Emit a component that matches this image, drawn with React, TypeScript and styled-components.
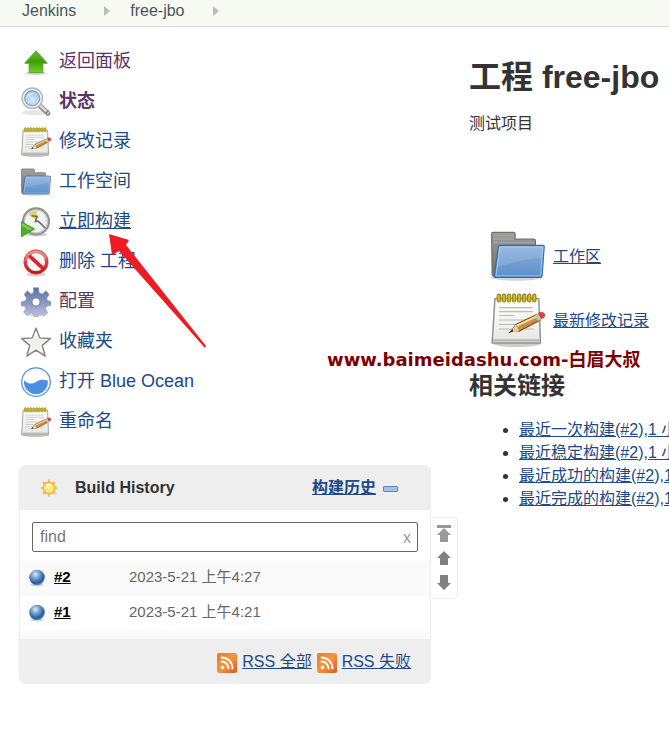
import React from "react";
import styled, { createGlobalStyle, css } from "styled-components";

const sans = `"Liberation Sans", Arial, "Noto Sans CJK SC", sans-serif`;
const LINK = "#204a87";
const VISITED = "#5c3566";

const GlobalStyle = createGlobalStyle`
  *, *::before, *::after { box-sizing: border-box; }
  body {
    margin: 0;
    background: #fff;
    color: #333;
    font-family: ${sans};
    font-size: 16px;
    line-height: 23px;
    overflow-x: hidden;
  }
`;

const Page = styled.div`
  position: relative;
  overflow: hidden;
`;

const Breadcrumbs = styled.nav`
  display: flex;
  align-items: center;
  gap: 20px;
  padding: 0 22px 4px;
  background: #f6faf2;
  border-bottom: 1px solid #d3d7cf;
`;

const Crumb = styled.a`
  color: #4d545d;
  line-height: 22px;
  text-decoration: none;
`;

const CrumbArrow = styled.span`
  width: 0;
  height: 0;
  margin-left: 8px;
  border: solid transparent;
  border-width: 5px 0 5px 6px;
  border-left-color: #babdb6;
`;

const Columns = styled.div`
  display: grid;
  grid-template-columns: minmax(0, 412fr) minmax(0, 200fr);
  gap: 38px;
  padding: 15px 0 48px 19px;
`;

const Side = styled.aside`
  min-width: 0;
`;

const Tasks = styled.ul`
  list-style: none;
  margin: 0 0 23px;
  padding: 0 2px;
`;

const Task = styled.li`
  display: flex;
  align-items: center;
  gap: 8px;
  height: 40px;
  svg {
    flex: none;
    width: 30px;
    height: 30px;
  }
`;

const TaskLink = styled.a<{ $visited?: boolean; $active?: boolean; $underlined?: boolean }>`
  padding-bottom: 2px;
  color: ${(p) => (p.$visited ? VISITED : LINK)};
  font-size: 18px;
  font-weight: ${(p) => (p.$active ? 700 : 400)};
  line-height: 24px;
  text-decoration: ${(p) => (p.$underlined ? "underline" : "none")};
`;

const link = css`
  color: ${LINK};
  text-decoration: underline;
`;

const HistoryPanel = styled.section`
  position: relative;
  border: 1px solid #eee;
  border-radius: 6px;
`;

const HistoryHeader = styled.header`
  display: flex;
  align-items: center;
  height: 44px;
  padding: 0 32px 0 18px;
  background: #eee;
  border-radius: 5px 5px 0 0;
`;

const HistoryTitle = styled.h2`
  flex: 1;
  margin: 0 0 0 15px;
  font-size: 16px;
  line-height: 24px;
`;

const TrendLink = styled.a`
  ${link}
  font-weight: 700;
  margin-right: 7px;
  padding-bottom: 2px;
`;

const CollapseButton = styled.button`
  width: 15px;
  height: 6px;
  margin-top: 2px;
  padding: 0;
  border: 1px solid #5b88bd;
  border-radius: 1px;
  background: #a3c1e3;
`;

const SearchBox = styled.div`
  display: flex;
  align-items: center;
  height: 30px;
  margin: 12px 12px 9px;
  border: 1px solid #666;
  border-radius: 2px;
`;

const SearchInput = styled.input`
  flex: 1;
  min-width: 0;
  padding: 0 7px;
  border: 0;
  outline: 0;
  background: transparent;
  font: 16px ${sans};
  &::placeholder {
    color: #777;
    opacity: 1;
  }
`;

const ClearButton = styled.button`
  padding: 2px 6px 0;
  border: 0;
  background: none;
  color: #999;
  font: 16px ${sans};
`;

const Builds = styled.table`
  width: 100%;
  border-collapse: collapse;
`;

const BuildRow = styled.tr`
  height: 35px;
  &:nth-child(odd) {
    background: #fafafa;
  }
`;

const BuildCell = styled.td<{ $width?: number }>`
  width: ${(p) => (p.$width ? `${p.$width}px` : "auto")};
  padding: 0 0 4px 8px;
  color: #666;
  font-size: 15px;
  vertical-align: middle;
  svg {
    display: block;
    margin-top: 3px;
  }
`;

const IconCell = styled(BuildCell)`
  padding-left: 8px;
`;

const BuildNumber = styled.a`
  color: #000;
  font-weight: 700;
  text-decoration: underline;
`;

const Spacer = styled.div`
  height: 8px;
  background: #fafafa;
`;

const HistoryFooter = styled.footer`
  display: flex;
  align-items: center;
  justify-content: flex-end;
  gap: 5px;
  height: 44px;
  padding-right: 19px;
  background: #eee;
  border-radius: 0 0 5px 5px;
`;

const FeedLink = styled.a`
  ${link}
  display: flex;
  align-items: center;
  gap: 5px;
  svg {
    flex: none;
    margin-top: 3px;
  }
`;

const PageControls = styled.div`
  position: absolute;
  left: 100%;
  top: 51px;
  display: grid;
  width: 28px;
  padding: 4px 0;
  border: 1px solid #eee;
  border-radius: 0 4px 4px 0;
`;

const PageButton = styled.button`
  height: 24px;
  padding: 0;
  border: 0;
  background: none;
  svg {
    display: block;
    margin: auto;
  }
`;

const Main = styled.main`
  min-width: 0;
  white-space: nowrap;
`;

const Title = styled.h1`
  margin: 12px 0;
  font-size: 32px;
  line-height: 46px;
`;

const Description = styled.p`
  margin: 0 0 88px;
  line-height: 24px;
`;

const Shortcut = styled.div`
  display: flex;
  align-items: center;
  gap: 8px;
  height: 64px;
  margin-left: 22px;
  a {
    ${link}
  }
`;

const SectionTitle = styled.h2`
  margin: 16px 0 14px;
  font-size: 24px;
  line-height: 36px;
`;

const Permalinks = styled.ul`
  margin: 0;
  padding-left: 50px;
  a {
    ${link}
  }
`;

const Watermark = styled.div`
  position: absolute;
  left: 327px;
  top: 347px;
  color: #7d0000;
  font: 700 18px/26px "DejaVu Sans", "Noto Sans CJK SC", sans-serif;
  white-space: nowrap;
`;

const Pointer = styled.svg`
  position: absolute;
  left: 108px;
  top: 233px;
  pointer-events: none;
`;

const UpIcon = () => (
  <svg viewBox="0 0 48 48" aria-hidden="true">
    <defs>
      <linearGradient id="up" x1="0" y1="0" x2="0" y2="1">
        <stop offset="0" stopColor="#73b83b" />
        <stop offset=".5" stopColor="#3f9c0c" />
        <stop offset="1" stopColor="#6fd422" />
      </linearGradient>
    </defs>
    <ellipse cx="24" cy="42" rx="17" ry="3" fill="#000" opacity=".16" />
    <path d="M24 6 42 26H35V41H13V26H6Z" fill="url(#up)" stroke="#58a12f" strokeWidth="1.500" strokeLinejoin="round" />
  </svg>
);

const SearchIcon = () => (
  <svg viewBox="0 0 48 48" aria-hidden="true">
    <defs>
      <radialGradient id="lens" cx=".5" cy=".6" r=".6">
        <stop offset="0" stopColor="#dcebfa" />
        <stop offset="1" stopColor="#8db5e3" />
      </radialGradient>
    </defs>
    <ellipse cx="22" cy="41" rx="20" ry="4" fill="#000" opacity=".1" />
    <path d="m29 29 14 13" stroke="#8b8d89" strokeWidth="8" strokeLinecap="round" />
    <path d="m31 30 12 11" stroke="#d6d8d4" strokeWidth="4" strokeLinecap="round" />
    <path d="m40 42 4-5" stroke="#777" strokeWidth="2" />
    <circle cx="18" cy="18" r="15.500" fill="url(#lens)" stroke="#b4b7b2" strokeWidth="4" />
    <circle cx="18" cy="18" r="14" fill="none" stroke="#eff0ee" strokeWidth="2.500" />
    <circle cx="18" cy="18" r="12" fill="none" stroke="#7299c8" strokeWidth="1.500" />
    <path d="M8 19c1-8 7-11 14-9-6 1-10 4-14 9Z" fill="#fff" opacity=".6" />
  </svg>
);

const NotepadIcon = ({ size }: { size?: number }) => (
  <svg viewBox="0 0 48 48" width={size} height={size} aria-hidden="true">
    <defs>
      <linearGradient id="paper" x1="0" y1="0" x2="0" y2="1">
        <stop offset="0" stopColor="#fff" />
        <stop offset="1" stopColor="#e6e7e4" />
      </linearGradient>
      <linearGradient id="pencil" x1="0" y1="0" x2="1" y2="1">
        <stop offset="0" stopColor="#f0c277" />
        <stop offset="1" stopColor="#a8671a" />
      </linearGradient>
    </defs>
    <ellipse cx="23" cy="45" rx="21" ry="3" fill="#000" opacity=".2" />
    <path d="M3.500 5H42.500L44 44.500H1Z" fill="url(#paper)" stroke="#90928e" strokeWidth="1.300" strokeLinejoin="round" />
    <path d="M2 42h41" stroke="#b5b7b3" strokeWidth="2" />
    <path d="M7 13h30M7 16.500h30M7 20h14M7 24h26M7 28h20M7 32h15M30 32h8" stroke="#b9bbb8" strokeWidth="1" />
    {[6, 10.500, 15, 19.500, 24, 28.500, 33, 37.500].map((x) => (
      <rect key={x} x={x - 0.5} y="1" width="3" height="7" rx="1.500" fill="#d1bb25" stroke="#8e7d12" strokeWidth=".9" />
    ))}
    <path d="m18 34 4-6 19-9 3 5-19 10Z" fill="url(#pencil)" stroke="#82500f" strokeWidth="1" strokeLinejoin="round" />
    <path d="m23 29 17-8" stroke="#ffe0a2" strokeWidth="1.500" />
    <path d="m17 35 5-7 3 6Z" fill="#e6cfa5" />
    <path d="m15 36 5-2-1-2Z" fill="#333" />
    <path d="m39 20 3-2 3 5-3 2Z" fill="#c2c5c0" />
    <path d="m42 18 3-1q4 1 2.500 4L45 23Z" fill="#e2413d" stroke="#b5281f" strokeWidth=".5" />
  </svg>
);

const FolderIcon = ({ size }: { size?: number }) => (
  <svg viewBox="0 0 48 48" width={size} height={size} aria-hidden="true">
    <defs>
      <linearGradient id="folder" x1="0" y1="0" x2="0" y2="1">
        <stop offset="0" stopColor="#8bb0dc" />
        <stop offset="1" stopColor="#5d8fca" />
      </linearGradient>
      <linearGradient id="folderBack" x1="0" y1="0" x2="0" y2="1">
        <stop offset="0" stopColor="#9b9d99" />
        <stop offset="1" stopColor="#6d6f6b" />
      </linearGradient>
    </defs>
    <ellipse cx="23" cy="43" rx="23" ry="3" fill="#000" opacity=".17" />
    <path d="M.5 4.500Q.5 3 2 3h18q1.500 0 1.500 1.500V9H38q1.500 0 1.500 1.500V42H3Q1 42 1 40Z" fill="url(#folderBack)" stroke="#70726e" />
    <path d="M2 6h18M2 9h18M2 12h36" stroke="#b4b6b2" opacity=".6" />
    <path d="M6.500 16q0-1.500 1.500-1.500H46q1.500 0 1.300 1.500L45.500 41q-.2 2-2 2H4q-1.500 0-1-2Z" fill="url(#folder)" stroke="#3769a8" />
    <path d="M8 16h38l-1.800 25.500H4.500Z" fill="none" stroke="#b7d0ed" opacity=".7" />
    <path d="M8 16h38l-.8 10Q28 26 6 34Z" fill="#fff" opacity=".12" />
  </svg>
);

const BuildNowIcon = () => (
  <svg viewBox="0 0 48 48" aria-hidden="true">
    <ellipse cx="25" cy="44" rx="17" ry="3" fill="#000" opacity=".2" />
    <circle cx="24" cy="23" r="20.500" fill="#f2f2ee" stroke="#8f928d" strokeWidth="4" />
    <circle cx="24" cy="23" r="18.500" fill="none" stroke="#c4c6d4" strokeWidth="2" />
    <path d="M25 22 12 12q4-6 13-6Z" fill="#e8ce5c" />
    <path d="m17 14 9 1-3 8h5L39 34" fill="none" stroke="#6b6d69" strokeWidth="2.500" />
    <path d="M40 14v18" stroke="#babdb6" strokeWidth="2" strokeDasharray="2 5" />
    <path d="M0 23 22 35 0 48Z" fill="#51ad25" stroke="#338711" strokeLinejoin="round" />
    <path d="m1 25 17 10-7 2Q7 31 1 31Z" fill="#a0dd72" opacity=".6" />
  </svg>
);

const DeleteIcon = () => (
  <svg viewBox="0 0 48 48" aria-hidden="true">
    <defs>
      <linearGradient id="ban" x1="0" y1="0" x2="0" y2="1">
        <stop offset="0" stopColor="#e86b6b" />
        <stop offset="1" stopColor="#cb1515" />
      </linearGradient>
    </defs>
    <ellipse cx="24" cy="44" rx="16" ry="3" fill="#000" opacity=".18" />
    <circle cx="24" cy="24" r="16.500" fill="#f7f5f5" />
    <path d="m12 13 24 22" stroke="#d62626" strokeWidth="6" />
    <circle cx="24" cy="24" r="17" fill="none" stroke="url(#ban)" strokeWidth="5" />
    <circle cx="24" cy="24" r="19.500" fill="none" stroke="#c23a3a" strokeWidth="1" />
    <path d="M7 22Q9 9 23 7q13 0 17 13" fill="none" stroke="#fff" strokeWidth="2" opacity=".35" />
  </svg>
);

const GearIcon = () => (
  <svg viewBox="0 0 48 48" aria-hidden="true">
    <defs>
      <linearGradient id="gear" x1="0" y1="0" x2="0" y2="1">
        <stop offset="0" stopColor="#59719f" />
        <stop offset=".5" stopColor="#8796c0" />
        <stop offset="1" stopColor="#c5c0e0" />
      </linearGradient>
    </defs>
    <ellipse cx="24" cy="44" rx="15" ry="3" fill="#000" opacity=".15" />
    <path
      d="M20 1h8l1 8 5 2 6-5 5 6-4 6 2 4 5 1v6l-7 2-2 4 4 6-6 5-6-3-3 1-1 3h-6l-1-4-4-2-6 5-6-6 4-5-2-4-6-1v-6l7-2 2-4-4-6 5-6 6 5 4-2Z"
      fill="url(#gear)"
      stroke="#7d8ab2"
      strokeWidth=".8"
      strokeLinejoin="round"
    />
    <circle cx="24" cy="24" r="8" fill="#6e7faf" opacity=".55" />
    <circle cx="24" cy="24" r="5.500" fill="#fff" />
  </svg>
);

const StarIcon = () => (
  <svg viewBox="0 0 48 48" aria-hidden="true">
    <path d="m24 2 6 15.500 17 1-13 11 4.500 17L24 37 9.500 46.500l4.500-17-13-11 17-1Z" fill="#eeeeec" stroke="#888a85" strokeWidth="2.500" strokeLinejoin="round" />
    <path d="m24 8 4.500 11.500 12 1-9.500 8 3 11.500-10-6.500L14 40l3-11.500-9.500-8 12-1Z" fill="none" stroke="#fff" strokeWidth="1.500" />
  </svg>
);

const OceanIcon = () => (
  <svg viewBox="0 0 48 48" aria-hidden="true">
    <circle cx="24" cy="24" r="22.800" fill="#fff" stroke="#4a90e2" strokeWidth="2" />
    <path d="M5 21c6 6 12 7 19 3 7-5 13-4 19-2a19.200 19.200 0 1 1-38-1Z" fill="#4a90e2" />
  </svg>
);

const SunIcon = () => (
  <svg viewBox="0 0 24 24" width="22" height="22" aria-hidden="true">
    <path d="m12 2 2 4 5-1-1 5 4 2-4 2 1 5-5-1-2 4-2-4-5 1 1-5-4-2 4-2-1-5 5 1Z" fill="#f9b65a" />
    <circle cx="12" cy="12" r="6" fill="#fce96f" stroke="#f5a53c" />
    <circle cx="11" cy="10" r="3" fill="#fff5b0" />
  </svg>
);

const BallIcon = () => (
  <svg viewBox="0 0 18 18" width="18" height="18" aria-hidden="true">
    <defs>
      <radialGradient id="ball" cx=".4" cy=".3" r=".7">
        <stop offset="0" stopColor="#dce9f4" />
        <stop offset=".4" stopColor="#709dcc" />
        <stop offset=".8" stopColor="#275b9f" />
        <stop offset="1" stopColor="#5c8cc4" />
      </radialGradient>
    </defs>
    <ellipse cx="9" cy="16" rx="7" ry="1.500" fill="#000" opacity=".15" />
    <circle cx="9" cy="8.500" r="7.800" fill="url(#ball)" />
  </svg>
);

const FeedIcon = () => (
  <svg viewBox="0 0 20 20" width="20" height="20" aria-hidden="true">
    <defs>
      <linearGradient id="feed" x1="0" y1="0" x2="1" y2="1">
        <stop offset="0" stopColor="#e47b2c" />
        <stop offset=".5" stopColor="#f6953f" />
        <stop offset="1" stopColor="#d75a20" />
      </linearGradient>
    </defs>
    <rect width="20" height="20" rx="2" fill="url(#feed)" />
    <circle cx="5.500" cy="14.500" r="1.800" fill="#fff" />
    <path d="M4.500 8.500a7 7 0 0 1 7 7M4.500 4.500a11 11 0 0 1 11 11" fill="none" stroke="#fff" strokeWidth="1.800" strokeLinecap="round" />
  </svg>
);

const ArrowIcon = ({ kind }: { kind: "top" | "up" | "down" }) => (
  <svg viewBox="0 0 16 20" width="16" height="20" aria-hidden="true" fill={kind === "top" ? "#999" : "#808080"}>
    {kind === "top" && <path d="M1 1h14v3H1ZM8 4l7 7h-3v7H4v-7H1Z" />}
    {kind === "up" && <path d="m8 3 7 7h-3v7H4v-7H1Z" />}
    {kind === "down" && <path d="m8 18 7-7h-3V3H4v8H1Z" />}
  </svg>
);

const tasks = [
  { label: "返回面板", icon: <UpIcon />, visited: true },
  { label: "状态", icon: <SearchIcon />, visited: true, active: true },
  { label: "修改记录", icon: <NotepadIcon /> },
  { label: "工作空间", icon: <FolderIcon /> },
  { label: "立即构建", icon: <BuildNowIcon />, underlined: true },
  { label: "删除 工程", icon: <DeleteIcon /> },
  { label: "配置", icon: <GearIcon />, visited: true },
  { label: "收藏夹", icon: <StarIcon /> },
  { label: "打开 Blue Ocean", icon: <OceanIcon /> },
  { label: "重命名", icon: <NotepadIcon /> },
];

const builds = [
  { id: "#2", date: "2023-5-21 上午4:27" },
  { id: "#1", date: "2023-5-21 上午4:21" },
];

const permalinks = [
  "最近一次构建(#2),1 小时",
  "最近稳定构建(#2),1 小时",
  "最近成功的构建(#2),1 小时",
  "最近完成的构建(#2),1 小时",
];

export default function App() {
  return (
    <Page>
      <GlobalStyle />
      <Breadcrumbs>
        <Crumb href="#jenkins">Jenkins</Crumb>
        <CrumbArrow />
        <Crumb href="#project">free-jbo</Crumb>
        <CrumbArrow />
      </Breadcrumbs>

      <Columns>
        <Side>
          <Tasks>
            {tasks.map((t) => (
              <Task key={t.label}>
                {t.icon}
                <TaskLink href="#task" $visited={t.visited} $active={t.active} $underlined={t.underlined}>
                  {t.label}
                </TaskLink>
              </Task>
            ))}
          </Tasks>

          <HistoryPanel>
            <HistoryHeader>
              <SunIcon />
              <HistoryTitle>Build History</HistoryTitle>
              <TrendLink href="#trend">构建历史</TrendLink>
              <CollapseButton type="button" aria-label="collapse" />
            </HistoryHeader>
            <SearchBox>
              <SearchInput type="text" placeholder="find" aria-label="find" />
              <ClearButton type="button">x</ClearButton>
            </SearchBox>
            <Builds>
              <tbody>
                {builds.map((b) => (
                  <BuildRow key={b.id}>
                    <IconCell $width={24}>
                      <BallIcon />
                    </IconCell>
                    <BuildCell $width={75}>
                      <BuildNumber href="#build">{b.id}</BuildNumber>
                    </BuildCell>
                    <BuildCell>{b.date}</BuildCell>
                  </BuildRow>
                ))}
              </tbody>
            </Builds>
            <Spacer />
            <HistoryFooter>
              <FeedLink href="#rss-all">
                <FeedIcon />
                RSS 全部
              </FeedLink>
              <FeedLink href="#rss-failed">
                <FeedIcon />
                RSS 失败
              </FeedLink>
            </HistoryFooter>
            <PageControls>
              <PageButton type="button" aria-label="newest">
                <ArrowIcon kind="top" />
              </PageButton>
              <PageButton type="button" aria-label="newer">
                <ArrowIcon kind="up" />
              </PageButton>
              <PageButton type="button" aria-label="older">
                <ArrowIcon kind="down" />
              </PageButton>
            </PageControls>
          </HistoryPanel>
        </Side>

        <Main>
          <Title>工程 free-jbo</Title>
          <Description>测试项目</Description>
          <Shortcut>
            <FolderIcon size={54} />
            <a href="#workspace">工作区</a>
          </Shortcut>
          <Shortcut>
            <NotepadIcon size={54} />
            <a href="#changes">最新修改记录</a>
          </Shortcut>
          <SectionTitle>相关链接</SectionTitle>
          <Permalinks>
            {permalinks.map((p) => (
              <li key={p}>
                <a href="#permalink">{p}</a>
              </li>
            ))}
          </Permalinks>
        </Main>
      </Columns>

      <Watermark>www.baimeidashu.com-白眉大叔</Watermark>
      <Pointer width="100" height="117" viewBox="0 0 100 117" aria-hidden="true">
        <path d="M1 1 21 7 18 12 98 113 97 115 11 18 4 22Z" fill="#ed1c24" />
      </Pointer>
    </Page>
  );
}
